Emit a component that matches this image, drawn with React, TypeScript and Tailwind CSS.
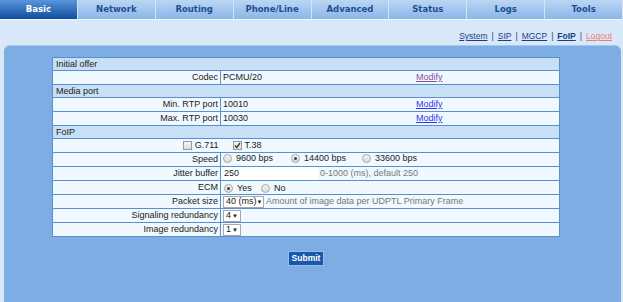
import React from "react";

const tabs = ["Basic", "Network", "Routing", "Phone/Line", "Advanced", "Status", "Logs", "Tools"];

function Radio({ on }: { on?: boolean }) {
  return (
    <span className="inline-flex items-center justify-center w-[9px] h-[9px] rounded-full border border-[#a9a9a9] bg-linear-to-b from-[#f4f4f4] to-[#d8d8d8] mr-[4px] align-middle">
      {on && <span className="w-[3px] h-[3px] rounded-full bg-[#444]" />}
    </span>
  );
}

function Check({ on }: { on?: boolean }) {
  return (
    <span className="inline-flex items-center justify-center w-[9px] h-[9px] border border-[#9a9a9a] bg-linear-to-b from-[#f6f6f6] to-[#dcdcdc] mr-[3px] align-middle">
      {on && (
        <svg width="7" height="7" viewBox="0 0 7 7">
          <path d="M1 3.5 L2.8 5.5 L6 1" stroke="#333" strokeWidth="1.3" fill="none" />
        </svg>
      )}
    </span>
  );
}

function Select({ value, w }: { value: string; w: string }) {
  return (
    <span className={`inline-flex items-center justify-between whitespace-nowrap h-[12px] border border-[#a8a8a8] bg-white px-[2px] ${w}`}>
      <span>{value}</span>
      <span className="text-[6px] leading-none">▼</span>
    </span>
  );
}

function Head({ text }: { text: string }) {
  return (
    <tr>
      <td colSpan={2} className="h-[13px] bg-[#c7e0f6] border border-[#5a8ed0] px-[3px] leading-none">
        {text}
      </td>
    </tr>
  );
}

function Row({ label, children }: { label: React.ReactNode; children: React.ReactNode }) {
  return (
    <tr>
      <td className="h-[14px] w-[168px] bg-[#eff9ff] border border-[#5a8ed0] text-right pr-[2px] leading-none">
        {label}
      </td>
      <td className="h-[14px] bg-[#eff9ff] border border-[#5a8ed0] pl-[2px] leading-none">{children}</td>
    </tr>
  );
}

function Modify({ visited }: { visited?: boolean }) {
  return (
    <span className={`underline ${visited ? "text-[#8a4c9c]" : "text-[#3434ee]"}`}>Modify</span>
  );
}

export default function App() {
  return (
    <div className="w-[623px] h-[302px] bg-[#d9e8f8] flex flex-col overflow-hidden font-['Liberation_Sans',Arial,sans-serif] text-[9px] text-[#222]">
      <div className="flex h-[20px] border-b border-[#eef5fd]">
        {tabs.map((t, i) => (
          <div
            key={t}
            className={`flex-1 flex items-center justify-center font-['DejaVu_Sans',sans-serif] font-bold text-[8.5px] border-r border-[#d4e4f7] ${
              i === 0
                ? "bg-linear-to-b from-[#5896dc] to-[#0e4c9f] text-white"
                : "bg-linear-to-b from-[#bcd6f4] to-[#8ab5e9] text-[#1d4f8f]"
            }`}
          >
            {t}
          </div>
        ))}
      </div>

      <div className="h-[25px] flex items-end justify-end pr-[11px] pb-[2px] gap-[4px] text-[8.5px] text-[#1a3e86]">
        <span className="underline">System</span>
        <span>|</span>
        <span className="underline">SIP</span>
        <span>|</span>
        <span className="underline">MGCP</span>
        <span>|</span>
        <span className="underline font-bold">FoIP</span>
        <span>|</span>
        <span className="underline text-[#f27a72]">Logout</span>
      </div>

      <div className="flex-1 ml-[4px] mr-[2px] bg-[#7eade4] rounded-t-[6px] border-t border-[#a5c6ee] pt-[11px] pl-[48px]">
        <div className="w-[508px]">
          <table className="w-[508px] border-collapse border border-[#4a80c4]">
            <tbody>
              <Head text="Initial offer" />
              <Row label="Codec">
                <div className="flex">
                  <span className="w-[193px]">PCMU/20</span>
                  <Modify visited />
                </div>
              </Row>
              <Head text="Media port" />
              <Row label="Min. RTP port">
                <div className="flex">
                  <span className="w-[193px]">10010</span>
                  <Modify />
                </div>
              </Row>
              <Row label="Max. RTP port">
                <div className="flex">
                  <span className="w-[193px]">10030</span>
                  <Modify />
                </div>
              </Row>
              <Head text="FoIP" />
              <tr>
                <td className="h-[14px] bg-[#eff9ff] border-y border-l border-[#5a8ed0] text-right pr-[2px] leading-none">
                  <Check />
                  G.711
                </td>
                <td className="h-[14px] bg-[#eff9ff] border-y border-r border-[#5a8ed0] pl-[12px] leading-none">
                  <Check on />
                  T.38
                </td>
              </tr>
              <Row label="Speed">
                <span className="inline-flex items-center">
                  <Radio />
                  <span className="w-[55px]">9600 bps</span>
                  <Radio on />
                  <span className="w-[58px]">14400 bps</span>
                  <Radio />
                  <span>33600 bps</span>
                </span>
              </Row>
              <tr>
                <td className="h-[14px] bg-[#eff9ff] border border-[#5a8ed0] text-right pr-[2px] leading-none">Jitter buffer</td>
                <td className="h-[14px] bg-[#eff9ff] border border-[#5a8ed0] p-0 leading-none">
                  <div className="flex items-center h-[13px]">
                    <span className="w-[97px] h-full bg-white flex items-center pl-[3px]">250</span>
                    <span className="pl-[2px] text-[#777]">0-1000 (ms), default 250</span>
                  </div>
                </td>
              </tr>
              <Row label="ECM">
                <span className="inline-flex items-center pl-[1px]">
                  <Radio on />
                  <span className="w-[24px]">Yes</span>
                  <Radio />
                  <span>No</span>
                </span>
              </Row>
              <Row label="Packet size">
                <span className="inline-flex items-center">
                  <Select value="40 (ms)" w="w-[41px]" />
                  <span className="pl-[2px] text-[#777]">Amount of image data per UDPTL Primary Frame</span>
                </span>
              </Row>
              <Row label="Signaling redundancy">
                <Select value="4" w="w-[18px]" />
              </Row>
              <Row label="Image redundancy">
                <Select value="1" w="w-[18px]" />
              </Row>
            </tbody>
          </table>
          <div className="flex justify-center mt-[14px]">
            <button className="h-[15px] px-[3px] bg-[#1957ab] border border-[#9bbbe6] text-white font-bold text-[8.5px] leading-none">
              Submit
            </button>
          </div>
        </div>
      </div>
    </div>
  );
}
